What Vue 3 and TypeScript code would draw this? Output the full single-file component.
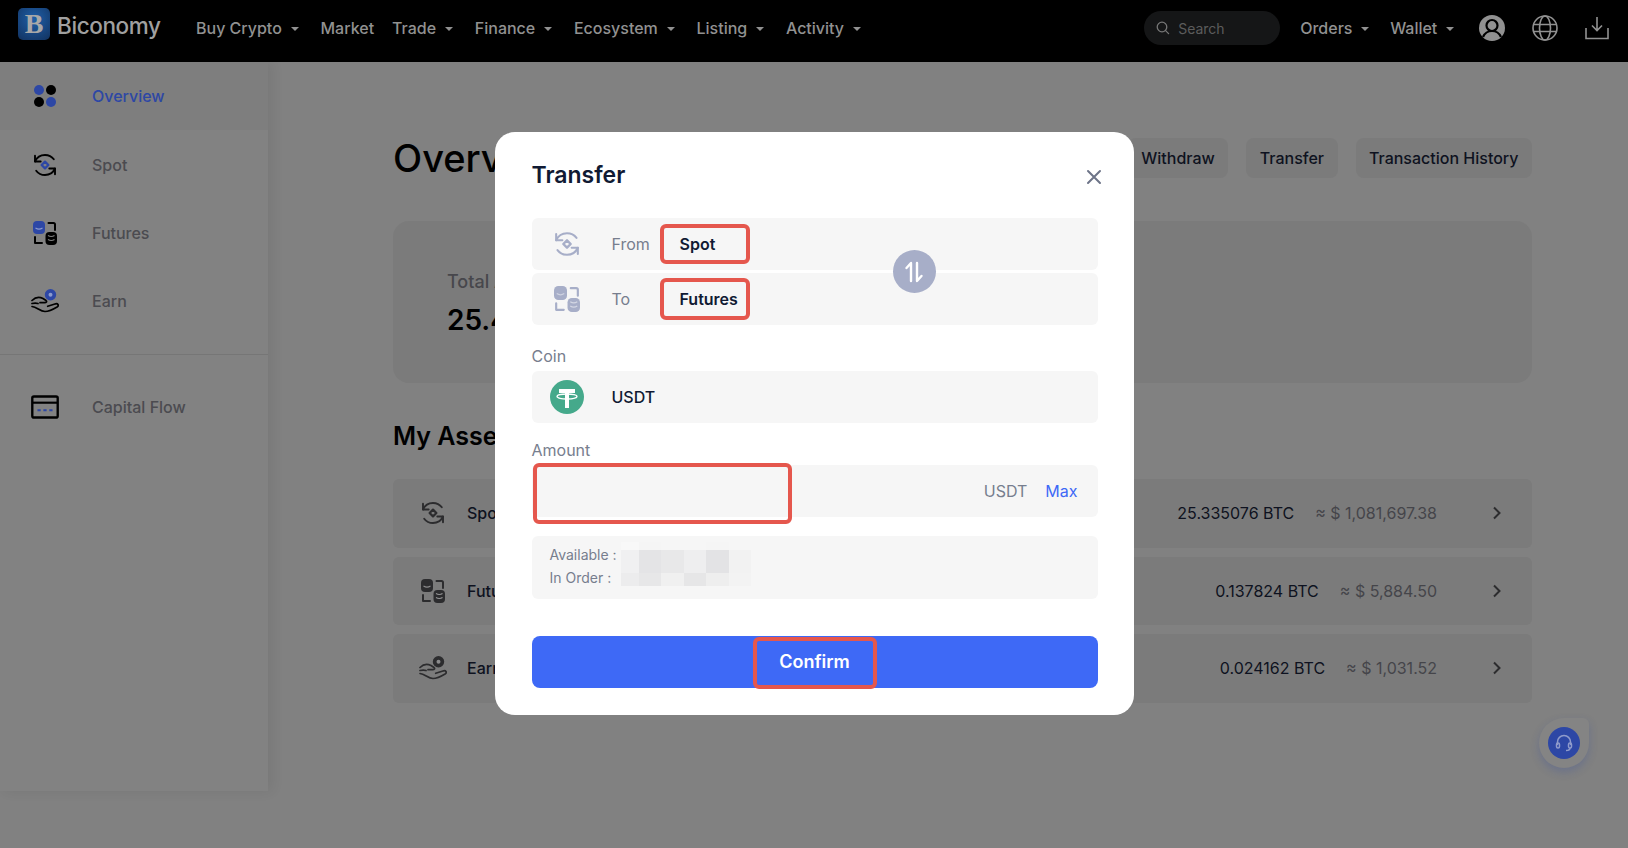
<script setup lang="ts">
const navItems = [
  { label: 'Buy Crypto', caret: true },
  { label: 'Market', caret: false },
  { label: 'Trade', caret: true },
  { label: 'Finance', caret: true },
  { label: 'Ecosystem', caret: true },
  { label: 'Listing', caret: true },
  { label: 'Activity', caret: true },
]

const sideItems = [
  { label: 'Overview', icon: '#i-overview', active: true },
  { label: 'Spot', icon: '#i-spot', active: false },
  { label: 'Futures', icon: '#i-futures', active: false },
  { label: 'Earn', icon: '#i-earn', active: false },
]

const assets = [
  { label: 'Spot', icon: '#i-spot', btc: '25.335076 BTC', usd: '≈ $ 1,081,697.38' },
  { label: 'Futures', icon: '#i-futures', btc: '0.137824 BTC', usd: '≈ $ 5,884.50' },
  { label: 'Earn', icon: '#i-earn', btc: '0.024162 BTC', usd: '≈ $ 1,031.52' },
]

// pixelated values on the balance box
const mosaic = [
  '#f8f8f8', '#f5f5f5', '#f6f6f6', '#f6f6f6', '#f5f5f5', '#f6f6f6',
  '#f0f0f1', '#e4e4e6', '#e8e8e9', '#eeeeef', '#e3e3e5', '#f2f2f2',
  '#ececed', '#e7e7e8', '#f0f0f0', '#e6e6e7', '#eeeeee', '#f3f3f3',
]
</script>

<template>
  <div class="page">
    <svg class="defs" width="0" height="0">
      <symbol id="i-overview" viewBox="0 0 24 24">
        <circle class="accent" cx="6" cy="6" r="5" />
        <circle cx="18" cy="6" r="5" fill="currentColor" />
        <circle cx="6" cy="18" r="5" fill="currentColor" />
        <circle class="accent" cx="18" cy="18" r="5" />
      </symbol>
      <symbol id="i-spot" viewBox="0 0 24 24">
        <g fill="none" stroke="currentColor" stroke-width="1.900" stroke-linecap="round" stroke-linejoin="round">
          <path d="M2 8.500C3.800 4.500 7.600 2 12 2c3.600 0 6.800 1.600 8.800 4.300" />
          <path d="M2 2.800v5.700h5.700" />
          <path d="M22 15.500C20.200 19.500 16.400 22 12 22c-3.600 0-6.800-1.600-8.800-4.300" />
          <path d="M22 21.200v-5.700h-5.700" />
        </g>
        <path class="accent-line" d="M12 8.600l3.400 3.400-3.400 3.400-3.400-3.400z" fill="none" stroke-width="2.200" stroke-linejoin="round" />
      </symbol>
      <symbol id="i-futures" viewBox="0 0 24 24">
        <rect class="accent" x="0" y="0" width="12" height="13" rx="4" />
        <path d="M2.500 7c2 1.300 5 1.300 7 0" fill="none" stroke="#fff" stroke-opacity=".45" stroke-width="1.100" />
        <path d="M15.500 2H20.500a1.500 1.500 0 0 1 1.500 1.500V9" fill="none" stroke="currentColor" stroke-width="2" stroke-linecap="round" />
        <path d="M2 16v6h7" fill="none" stroke="currentColor" stroke-width="2" stroke-linecap="round" stroke-linejoin="round" />
        <rect x="12.500" y="11" width="11.500" height="13" rx="4" fill="currentColor" />
        <path d="M15 14.500c2 1.300 4.500 1.300 6.500 0M15 18.500c2 1.300 4.500 1.300 6.500 0" fill="none" stroke="#fff" stroke-opacity=".5" stroke-width="1.100" />
      </symbol>
      <symbol id="i-earn" viewBox="0 0 28 24">
        <circle class="accent" cx="19.500" cy="5.700" r="5.700" />
        <circle cx="19.500" cy="5.700" r="2" fill="#fff" fill-opacity=".45" />
        <g fill="none" stroke="currentColor" stroke-width="1.700" stroke-linecap="round" stroke-linejoin="round">
          <path d="M1 11.500C4 8.500 8 7.500 12 9.500l3 2c1.200 1.200.3 2.200-1.300 2.200H9" />
          <path d="M1 17.500C6 18 9 22.500 14 22.500c4 0 9-2.700 12.500-4.800 1.500-1.500.3-3.400-1.800-2.900l-8 2.500" />
          <path d="M1 14.500c2-.5 4-.7 6 0" />
        </g>
      </symbol>
      <symbol id="i-flow" viewBox="0 0 26 22">
        <rect x="1.200" y="1.200" width="23.600" height="19.600" rx="1.500" fill="none" stroke="currentColor" stroke-width="2.200" />
        <path d="M1.500 7h23" stroke="currentColor" stroke-width="2" />
        <path class="accent-line" d="M6 14h3M11.500 14h3M17 14h3" stroke-width="2" fill="none" />
      </symbol>
    </svg>

    <header class="topbar">
      <div class="logo">
        <span class="logo-mark">B</span>
        <span class="logo-name">Biconomy</span>
      </div>
      <nav class="nav">
        <span v-for="item in navItems" :key="item.label" class="nav-item">
          {{ item.label }}<i v-if="item.caret" class="caret"></i>
        </span>
      </nav>
      <div class="top-right">
        <div class="search">
          <svg width="14" height="14" viewBox="0 0 14 14" fill="none" stroke="#777" stroke-width="1.300">
            <circle cx="6" cy="6" r="4.800" />
            <path d="M9.600 9.600l3 3" stroke-linecap="round" />
          </svg>
          <span>Search</span>
        </div>
        <span class="nav-item orders">Orders<i class="caret"></i></span>
        <span class="nav-item wallet">Wallet<i class="caret"></i></span>
        <svg class="top-icon user" width="26" height="26" viewBox="0 0 26 26">
          <circle cx="13" cy="13" r="13" fill="#919191" />
          <circle cx="13" cy="10.500" r="5.500" fill="none" stroke="#000" stroke-width="2.200" />
          <path d="M4 22c2-4.500 5.500-6 9-6s7 1.500 9 6" fill="none" stroke="#000" stroke-width="2.200" />
        </svg>
        <svg class="top-icon globe" width="26" height="26" viewBox="0 0 26 26" fill="none" stroke="#919191" stroke-width="1.600">
          <circle cx="13" cy="13" r="12" />
          <ellipse cx="13" cy="13" rx="5.500" ry="12" />
          <path d="M1.500 9.500h23M1.500 16.500h23" />
        </svg>
        <svg class="top-icon download" width="24" height="24" viewBox="0 0 24 24" fill="none" stroke="#919191" stroke-width="1.600">
          <path d="M12 1v13M7 9.500l5 5 5-5" />
          <path d="M1 12v10.500h22V12" />
        </svg>
      </div>
    </header>

    <div class="body">
      <aside class="sidebar">
        <div v-for="item in sideItems" :key="item.label" class="side-item" :class="{ active: item.active }">
          <svg class="side-icon" width="28" height="24"><use :href="item.icon" /></svg>
          <span>{{ item.label }}</span>
        </div>
        <div class="side-divider"></div>
        <div class="side-item">
          <svg class="side-icon" width="28" height="24"><use href="#i-flow" /></svg>
          <span>Capital Flow</span>
        </div>
      </aside>

      <main class="main">
        <div class="title-row">
          <h1>Overview</h1>
          <div class="actions">
            <span class="action">Deposit</span>
            <span class="action">Withdraw</span>
            <span class="action">Transfer</span>
            <span class="action">Transaction History</span>
          </div>
        </div>
        <section class="total-card">
          <div class="total-label">Total Assets</div>
          <div class="total-value">25.497062 BTC</div>
        </section>
        <h2>My Assets</h2>
        <div class="asset-list">
          <div v-for="row in assets" :key="row.label" class="asset-row">
            <svg class="asset-icon" width="28" height="24"><use :href="row.icon" /></svg>
            <span class="asset-name">{{ row.label }}</span>
            <span class="asset-btc">{{ row.btc }}</span>
            <span class="asset-usd">{{ row.usd }}</span>
            <svg class="chevron" width="10" height="14" viewBox="0 0 10 14" fill="none" stroke="currentColor" stroke-width="2">
              <path d="M2 1.500L7.500 7 2 12.500" />
            </svg>
          </div>
        </div>
      </main>
    </div>

    <div class="help">
      <span class="help-dot">
        <svg width="20" height="20" viewBox="0 0 20 20" fill="none" stroke="#8f9bcb" stroke-width="1.500">
          <path d="M3.500 12V9a6.500 6.500 0 0 1 13 0v3" />
          <rect x="2.500" y="10" width="3" height="5" rx="1.500" />
          <rect x="14.500" y="10" width="3" height="5" rx="1.500" />
          <path d="M16 15c0 2-2 2.500-4 2.500" />
        </svg>
      </span>
    </div>

    <!-- page colours below are the dimmed ones, the scrim is baked in -->
    <div class="modal-layer">
      <div class="modal">
        <div class="modal-head">
          <h3>Transfer</h3>
          <svg class="close" width="16" height="16" viewBox="0 0 16 16" stroke="#6d7488" stroke-width="2" stroke-linecap="round">
            <path d="M2 2l12 12M14 2L2 14" />
          </svg>
        </div>

        <div class="transfer-rows">
          <div class="field">
            <svg class="field-icon" width="26" height="26"><use href="#i-spot" /></svg>
            <span class="field-label">From</span>
            <span class="marked spot">Spot</span>
          </div>
          <div class="field">
            <svg class="field-icon" width="26" height="26"><use href="#i-futures" /></svg>
            <span class="field-label">To</span>
            <span class="marked futures">Futures</span>
          </div>
          <span class="swap">
            <svg width="20" height="24" viewBox="0 0 20 24" fill="none" stroke="#fff" stroke-width="2.400" stroke-linecap="round" stroke-linejoin="round">
              <path d="M7 21V3L2.500 8" />
              <path d="M13 3v18l4.500-5" />
            </svg>
          </span>
        </div>

        <label class="caption coin-caption">Coin</label>
        <div class="field">
          <svg class="field-icon tether" width="34" height="34" viewBox="0 0 34 34">
            <circle cx="17" cy="17" r="17" fill="#45a98b" />
            <path d="M9 9h16v4h-6v15h-4V13H9z" fill="#fff" />
            <ellipse cx="17" cy="16.500" rx="10" ry="2.500" fill="none" stroke="#fff" stroke-width="1.300" />
          </svg>
          <span class="coin-name">USDT</span>
        </div>

        <label class="caption amount-caption">Amount</label>
        <div class="amount">
          <input class="amount-input" type="text" />
          <span class="amount-unit">USDT</span>
          <span class="amount-max">Max</span>
        </div>

        <div class="balance">
          <div>Available :</div>
          <div>In Order :</div>
          <div class="mosaic">
            <i v-for="(c, idx) in mosaic" :key="idx" :style="{ background: c }"></i>
          </div>
        </div>

        <button class="confirm" type="button"><span>Confirm</span></button>
      </div>
    </div>
  </div>
</template>

<style scoped>
.page {
  position: relative;
  width: 1628px;
  height: 848px;
  overflow: hidden;
  background: #818181;
  font-family: Inter, "Liberation Sans", sans-serif;
  color: #0e1220;
  --accent: #2d47a5;
}

.defs {
  position: absolute;
}

.accent {
  fill: var(--accent);
}

.accent-line {
  stroke: var(--accent);
}

.topbar {
  display: flex;
  align-items: center;
  height: 62px;
  padding-bottom: 6px;
  box-sizing: border-box;
  background: #000;
  color: #919191;
  font-size: 16px;
  font-weight: 500;
}

.logo {
  display: flex;
  align-items: center;
  margin-left: 18px;
  width: 178px;
}

.logo-mark {
  display: flex;
  align-items: center;
  justify-content: center;
  width: 32px;
  height: 32px;
  margin-top: -8px;
  border-radius: 5px;
  background: radial-gradient(circle at 50% 35%, #1f5fa8, #12325f);
  font-family: "Liberation Serif", serif;
  font-size: 28px;
  font-weight: 700;
  color: #a8a8a8;
}

.logo-name {
  margin: -6px 0 0 7px;
  font-size: 22.5px;
  letter-spacing: -0.4px;
  color: #a0a0a0;
}

.nav {
  display: flex;
  gap: 18px;
}

.nav-item {
  display: flex;
  align-items: center;
  white-space: nowrap;
}

.caret {
  width: 0;
  height: 0;
  margin-left: 9px;
  margin-right: 3.7px;
  margin-top: 1px;
  border: 4px solid transparent;
  border-top-color: currentColor;
  border-bottom-width: 0;
}

.top-right {
  display: flex;
  align-items: center;
  margin-left: auto;
}

.search {
  display: flex;
  align-items: center;
  gap: 8px;
  width: 136px;
  height: 34px;
  padding-left: 12px;
  box-sizing: border-box;
  border-radius: 17px;
  background: #151617;
  color: #5c5c5c;
  font-size: 14px;
  font-weight: 400;
}

.orders {
  margin-left: 20px;
}

.wallet {
  margin-left: 17px;
}

.top-icon.user {
  margin-left: 21px;
}

.top-icon.globe {
  margin-left: 27px;
}

.top-icon.download {
  margin: 0 19px 0 27px;
}

.body {
  display: flex;
}

.sidebar {
  width: 268px;
  height: 729px;
  flex: none;
  box-shadow: 4px 0 12px rgba(0, 0, 0, 0.07);
  background: #828282;
  font-size: 16px;
  font-weight: 500;
}

.side-item {
  display: flex;
  align-items: center;
  height: 68.4px;
  color: #4b4b50;
}

.side-item.active {
  color: var(--accent);
  background: #7e7e7e;
}

.side-icon {
  flex: none;
  margin-left: 31px;
  margin-right: 33px;
  color: #000;
}

.side-divider {
  height: 1px;
  margin-top: 18px;
  margin-bottom: 18px;
  background: #767676;
}

.main {
  width: 1139px;
  margin-left: 125px;
}

.title-row {
  display: flex;
  align-items: center;
  justify-content: space-between;
  margin-top: 76px;
  height: 40px;
}

h1 {
  margin: 0;
  font-size: 38px;
  font-weight: 500;
  color: #000;
}

.actions {
  display: flex;
  gap: 18px;
}

.action {
  display: flex;
  align-items: center;
  height: 40px;
  padding: 0 13.5px;
  border-radius: 8px;
  background: #7b7b7b;
  font-size: 16px;
  font-weight: 500;
}

.total-card {
  height: 162px;
  margin-top: 43px;
  padding: 49px 0 0 54px;
  box-sizing: border-box;
  border-radius: 16px;
  background: #7b7b7b;
}

.total-label {
  font-size: 18px;
  line-height: 24px;
  font-weight: 500;
  color: #47474c;
}

.total-value {
  margin-top: 8px;
  font-size: 28px;
  line-height: 36px;
  font-weight: 600;
  color: #000;
}

h2 {
  margin: 38px 0 0;
  font-size: 25px;
  line-height: 30px;
  font-weight: 600;
  color: #000;
}

.asset-list {
  display: flex;
  flex-direction: column;
  gap: 9px;
  margin-top: 28px;
}

.asset-row {
  display: flex;
  align-items: center;
  height: 68.5px;
  border-radius: 6px;
  background: #7b7b7b;
  font-size: 16px;
  font-weight: 400;
}

.asset-icon {
  flex: none;
  margin: 0 20px 0 26px;
  color: #2c2c2e;
  --accent: #2c2c2e;
}

.asset-name {
  flex: 1;
  font-weight: 500;
}

.asset-usd {
  margin-left: 21px;
  color: #45454a;
}

.chevron {
  margin: 0 30px 0 55px;
  color: #2c2c2e;
}

.help {
  position: absolute;
  left: 1539px;
  top: 718px;
  display: flex;
  align-items: center;
  justify-content: center;
  width: 50px;
  height: 50px;
  border-radius: 50% 6px 50% 50%;
  background: #848484;
  box-shadow: 0 4px 8px rgba(45, 71, 165, 0.25);
}

.help-dot {
  display: flex;
  align-items: center;
  justify-content: center;
  width: 32px;
  height: 32px;
  border-radius: 50%;
  background: var(--accent);
}

.modal-layer {
  position: absolute;
  inset: 0;
  display: flex;
  align-items: center;
  justify-content: center;
  padding-bottom: 1px;
  box-sizing: border-box;
}

.modal {
  width: 639px;
  height: 583px;
  padding: 0 36px 0 37px;
  box-sizing: border-box;
  border-radius: 20px;
  background: #fff;
  --accent: #a7aec8;
}

.modal-head {
  display: flex;
  align-items: center;
  justify-content: space-between;
  height: 86px;
}

h3 {
  margin: 0;
  font-size: 23px;
  font-weight: 600;
  color: #101a33;
}

.close {
  margin: 4px -4px 0 0;
}

.transfer-rows {
  position: relative;
  display: flex;
  flex-direction: column;
  gap: 3px;
}

.field {
  display: flex;
  align-items: center;
  height: 52px;
  border-radius: 6px;
  background: #f6f6f6;
  font-size: 16px;
  font-weight: 500;
}

.field-icon {
  flex: none;
  margin: 0 32px 0 22px;
  color: #a7aec8;
}

.field-icon.tether {
  margin: 0 28px 0 18px;
}

.field-label {
  width: 48px;
  color: #777e8e;
  font-weight: 400;
}

.marked {
  display: flex;
  align-items: center;
  box-sizing: border-box;
  width: 90px;
  padding-left: 16px;
  border: 4px solid #e5574d;
  border-radius: 6px;
  color: #101a33;
  font-weight: 600;
}

.marked.spot {
  height: 40px;
}

.marked.futures {
  height: 42px;
}

.swap {
  position: absolute;
  left: 361px;
  top: 32px;
  display: flex;
  align-items: center;
  justify-content: center;
  width: 43px;
  height: 43px;
  border-radius: 50%;
  background: #a7aec8;
}

.caption {
  display: block;
  margin-bottom: 5px;
  font-size: 16px;
  line-height: 20px;
  color: #777e8e;
}

.coin-caption {
  padding-top: 21px;
}

.amount-caption {
  padding-top: 17px;
}

.coin-name {
  color: #101a33;
  font-weight: 500;
}

.amount {
  position: relative;
  display: flex;
  align-items: center;
  justify-content: flex-end;
  height: 52px;
  padding-right: 20px;
  border-radius: 6px;
  background: #f6f6f6;
  font-size: 16px;
}

.amount-input {
  position: absolute;
  left: 1px;
  top: -2px;
  width: 259px;
  height: 61px;
  box-sizing: border-box;
  border: 4px solid #e5574d;
  border-radius: 6px;
  background: transparent;
  outline: none;
}

.amount-unit {
  color: #777e8e;
}

.amount-max {
  margin-left: 18px;
  color: #3e69f6;
}

.balance {
  position: relative;
  height: 63px;
  margin-top: 19px;
  padding: 7px 0 0 18px;
  box-sizing: border-box;
  border-radius: 6px;
  background: #f6f6f6;
  font-size: 14px;
  line-height: 23px;
  color: #777e8e;
}

.mosaic {
  position: absolute;
  left: 89px;
  top: 6px;
  display: grid;
  grid-template-columns: 18px repeat(5, 22.500px);
  grid-template-rows: 8px 23px 13px;
}

.confirm {
  display: flex;
  justify-content: center;
  width: 100%;
  height: 52px;
  margin-top: 37px;
  padding: 0;
  border: none;
  border-radius: 8px;
  background: #3e69f6;
  color: #fff;
  font-family: inherit;
  font-size: 18px;
  font-weight: 600;
}

.confirm span {
  display: flex;
  align-items: center;
  justify-content: center;
  box-sizing: border-box;
  width: 124px;
  height: 52px;
  margin-top: 1px;
  padding-bottom: 3px;
  border: 4px solid #e5574d;
  border-radius: 6px;
}
</style>
